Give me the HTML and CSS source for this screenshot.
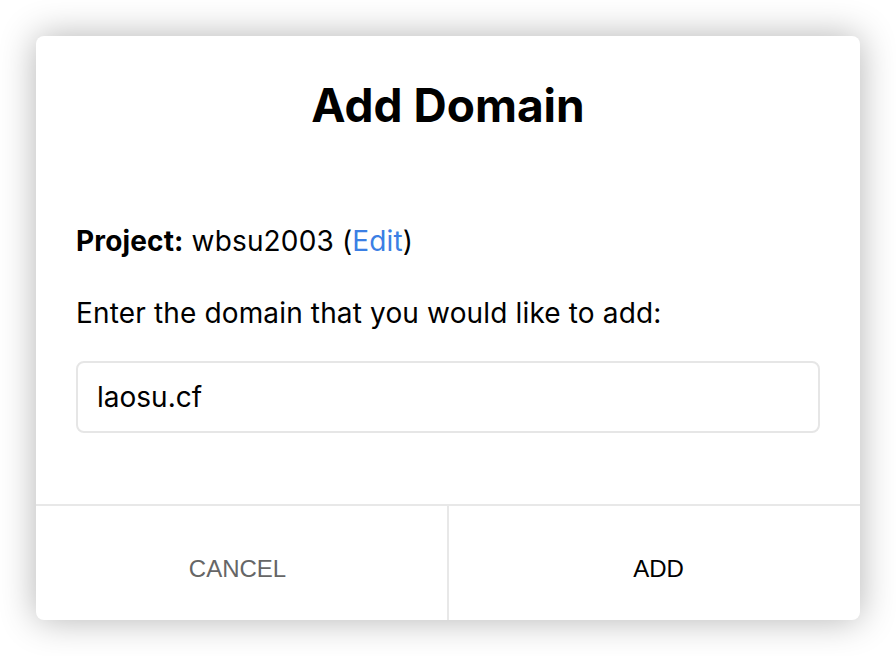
FILE: index.html
```html
<!DOCTYPE html>
<html>
<head>
<meta charset="utf-8">
<link rel="stylesheet" href="styles.css">
</head>
<body>
<div class="dialog">
  <div class="content">
    <h1 class="title">Add Domain</h1>
    <p class="project"><b>Project:</b> wbsu2003 (<a class="edit">Edit</a>)</p>
    <p class="label">Enter the domain that you would like to add:</p>
    <div class="input">laosu.cf</div>
  </div>
  <div class="footer">
    <div class="btn cancel">CANCEL</div>
    <div class="btn add">ADD</div>
  </div>
</div>
</body>
</html>
```
FILE: styles.css
```css
html, body { margin: 0; padding: 0; background: #fff; }
body { width: 896px; height: 656px; padding: 36px; box-sizing: border-box; font-family: Inter, "Noto Sans", sans-serif; }
.dialog {
  width: 824px; height: 584px; background: #fff; border-radius: 8px;
  box-shadow: 0 0 36px rgba(0,0,0,0.3);
  display: flex; flex-direction: column; overflow: hidden;
}
.content { flex: 1; padding: 0 40px; display: flex; flex-direction: column; }
.title { margin: 41px 0 0; font-size: 46px; font-weight: 700; text-align: center; line-height: 56px; color: #000; }
.project { margin: 92px 0 0; font-size: 28px; line-height: 32px; letter-spacing: 0.15px; color: #000; }
.project b { font-weight: 700; }
.edit { color: #3b7fe4; }
.label { margin: 40px 0 0; font-size: 28px; line-height: 32px; letter-spacing: 0.15px; color: #000; }
.input { margin-top: 32px; height: 72px; box-sizing: border-box; border: 2px solid #e6e6e6; border-radius: 8px; padding: 0 19px; font-size: 28px; line-height: 68px; color: #000; }
.footer { height: 116px; border-top: 2px solid #e8e8e8; display: flex; box-sizing: border-box; }
.btn { flex: 1; display: flex; align-items: center; justify-content: center; padding-top: 12px; font-family: "Liberation Sans", Arial, sans-serif; font-size: 24px; }
.cancel { color: #666; border-right: 2px solid #e8e8e8; padding-right: 8px; }
.add { color: #000; padding-left: 8px; }
```
